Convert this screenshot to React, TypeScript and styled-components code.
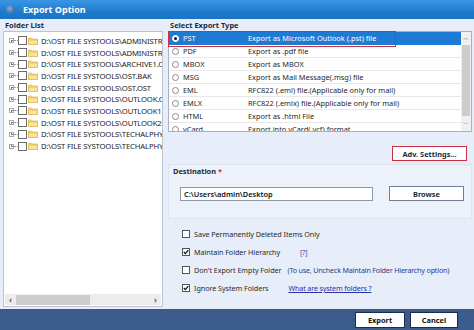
import React from "react";
import styled, { createGlobalStyle, css } from "styled-components";

const Global = createGlobalStyle`
  html, body { margin: 0; padding: 0; }
  body { font-family: "Noto Sans", "Open Sans", sans-serif; }
  * { box-sizing: border-box; }
`;

const Window = styled.div`
  width: 474px;
  height: 330px;
  display: flex;
  flex-direction: column;
  background: #e7eef9;
  overflow: hidden;
`;

const TitleBar = styled.div`
  height: 19px;
  flex: none;
  display: flex;
  align-items: center;
  gap: 8px;
  padding-left: 6px;
  background: linear-gradient(#3a97e4, #1f7bcf 60%, #1a72c4);
  color: #fff;
  font-weight: 700;
  font-size: 9px;
`;

const AppIcon = styled.span`
  width: 9px;
  height: 9px;
  border-radius: 50%;
  background: radial-gradient(circle at 40% 40%, #9fb6d6, #3e6aa3 70%);
  opacity: 0.8;
`;

const Main = styled.div`
  flex: 1;
  display: flex;
  gap: 5px;
  padding: 0 2px 2px 3px;
  min-height: 0;
`;

const LeftCol = styled.div`
  width: 160px;
  display: flex;
  flex-direction: column;
`;

const RightCol = styled.div`
  flex: 1;
  display: flex;
  flex-direction: column;
  min-width: 0;
`;

const SectionLabel = styled.div`
  height: 12px;
  font-size: 7.5px;
  font-weight: 700;
  color: #1d2a3a;
  line-height: 12px;
  padding-left: 2px;
  flex: none;
`;

const TreeBox = styled.div`
  flex: 1;
  background: #fff;
  border: 1px solid #b9c3d2;
  display: flex;
  flex-direction: column;
  min-height: 0;
`;

const TreeList = styled.div`
  flex: 1;
  padding: 3px 0 0 5px;
  overflow: hidden;
`;

const TreeRow = styled.div`
  height: 11.7px;
  display: flex;
  align-items: center;
  white-space: nowrap;
`;

const Expander = styled.span`
  width: 5px;
  height: 5px;
  border: 1px solid #a9a9a9;
  position: relative;
  flex: none;
  &::before {
    content: "";
    position: absolute;
    left: 0.5px;
    right: 0.5px;
    top: 1px;
    height: 1px;
    background: #777;
  }
  &::after {
    content: "";
    position: absolute;
    top: 0.5px;
    bottom: 0.5px;
    left: 1px;
    width: 1px;
    background: #777;
  }
`;

const Dots = styled.span`
  width: 4px;
  border-top: 1px dotted #999;
  flex: none;
`;

const Check = styled.span`
  width: 9px;
  height: 9px;
  border: 1px solid #6d6d6d;
  background: #fff;
  flex: none;
`;

const FolderSvg = styled.svg`
  flex: none;
  margin: 0 3px 0 1px;
`;

const TreeText = styled.span`
  font-size: 7.7px;
  color: #1a1a1a;
  letter-spacing: -0.15px;
`;

const HScroll = styled.div`
  height: 11px;
  background: #ececec;
  display: flex;
  align-items: center;
  flex: none;
  margin: 0 1px 1px;
`;

const ScrollArrow = styled.span`
  width: 11px;
  font-size: 8px;
  color: #555;
  text-align: center;
  line-height: 11px;
  font-weight: 700;
`;

const HThumb = styled.span`
  width: 74px;
  height: 10px;
  background: #cdcdcd;
`;

const Spacer = styled.span`
  flex: 1;
`;

const TypeTable = styled.div`
  height: 101px;
  flex: none;
  background: #fff;
  border: 1px solid #a7b1c0;
  display: flex;
  position: relative;
`;

const TypeRows = styled.div`
  flex: 1;
  overflow: hidden;
`;

const TypeRow = styled.div<{ $sel?: boolean }>`
  height: 13px;
  display: flex;
  align-items: center;
  border-bottom: 1px solid #e6e8ec;
  font-size: 7.4px;
  color: #1f1f1f;
  white-space: nowrap;
  ${(p) =>
    p.$sel &&
    css`
      background: #1f7ad3;
      color: #fff;
      border-bottom-color: #1f7ad3;
    `}
`;

const TypeName = styled.span`
  width: 65px;
  flex: none;
`;

const Radio = styled.span<{ $on?: boolean }>`
  width: 7px;
  height: 7px;
  flex: none;
  border-radius: 50%;
  margin: 0 4px 0 3px;
  border: 1px solid #8a8a8a;
  background: #fff;
  position: relative;
  ${(p) =>
    p.$on &&
    css`
      border-color: #fff;
      &::after {
        content: "";
        position: absolute;
        left: 1px;
        top: 1px;
        width: 3px;
        height: 3px;
        border-radius: 50%;
        background: #111;
      }
    `}
`;

const SelOutline = styled.div`
  position: absolute;
  left: -1px;
  top: -1px;
  width: 228px;
  height: 16px;
  border: 1.5px solid #c8323f;
  pointer-events: none;
`;

const VScroll = styled.div`
  width: 10px;
  flex: none;
  background: #f0f0f0;
  display: flex;
  flex-direction: column;
  align-items: center;
`;

const VArrow = styled.span`
  height: 13px;
  font-size: 6px;
  line-height: 13px;
  color: #555;
`;

const VThumb = styled.span`
  width: 8px;
  height: 71px;
  background: #cdcdcd;
`;

const AdvRow = styled.div`
  display: flex;
  justify-content: flex-end;
  padding: 14px 5px 0 0;
  flex: none;
`;

const Button = styled.button<{ $red?: boolean; $w: number }>`
  width: ${(p) => p.$w}px;
  height: 15px;
  padding: 0;
  font-family: inherit;
  font-size: 7.4px;
  font-weight: 700;
  color: #1a2a44;
  background: #fff;
  border: 1px solid #6f7f96;
  ${(p) =>
    p.$red &&
    css`
      border: 1.5px solid #c8323f;
    `}
`;

const DestBox = styled.div`
  margin-top: 3px;
  height: 55px;
  flex: none;
  border: 1px solid #dde4ef;
  background: #ecf1fa;
  padding: 0 7px 0 4px;
  display: flex;
  flex-direction: column;
`;

const DestLabel = styled.div`
  font-size: 7.4px;
  font-weight: 700;
  color: #1d2a3a;
  height: 12px;
  line-height: 12px;
  span { color: #c8323f; }
`;

const DestRow = styled.div`
  display: flex;
  align-items: center;
  justify-content: space-between;
  margin-top: 9px;
  padding-left: 7px;
`;

const PathInput = styled.div`
  width: 193px;
  height: 14px;
  background: #fff;
  border: 1px solid #8c98aa;
  font-size: 7.4px;
  font-weight: 600;
  color: #111;
  line-height: 12px;
  padding-left: 3px;
`;

const Options = styled.div`
  margin-top: 6px;
  padding-left: 14px;
  display: flex;
  flex-direction: column;
`;

const OptRow = styled.div`
  height: 18px;
  display: flex;
  align-items: center;
  font-size: 7.2px;
  color: #2a2a2a;
  letter-spacing: -0.05px;
  white-space: nowrap;
`;

const OptCheck = styled.span`
  width: 8px;
  height: 8px;
  border: 1px solid #555;
  background: #fff;
  margin-right: 4px;
  flex: none;
  display: flex;
  align-items: center;
  justify-content: center;
`;

const Help = styled.span`
  margin-left: 20px;
  color: #3a4aa0;
  font-size: 7px;
`;

const Note = styled.span`
  margin-left: 6px;
  color: #2d3a8c;
  letter-spacing: -0.2px;
`;

const Link = styled.span`
  margin-left: 20px;
  color: #2f2fa8;
  text-decoration: underline;
  letter-spacing: -0.15px;
`;

const Footer = styled.div`
  height: 21px;
  flex: none;
  background: #3b5b8c;
  display: flex;
  align-items: center;
  justify-content: flex-end;
  gap: 5px;
  padding-right: 16px;
`;

const FootButton = styled(Button)`
  height: 16px;
  border: 1px solid #1e2d44;
  color: #111;
`;

const Tick = () => (
  <svg width="6" height="6" viewBox="0 0 6 6">
    <path d="M0.8 3 L2.4 4.6 L5.3 1.2" stroke="#111" strokeWidth="1.3" fill="none" />
  </svg>
);

const Folder = () => (
  <FolderSvg width="10" height="8" viewBox="0 0 10 8">
    <path d="M0.5 1 H3.5 L4.5 2 H9.5 V7.5 H0.5 Z" fill="#f5d67a" stroke="#d9b24a" strokeWidth="0.6" />
    <path d="M0.5 3 H9.5 V7.5 H0.5 Z" fill="#fbe39a" stroke="#d9b24a" strokeWidth="0.6" />
  </FolderSvg>
);

const folders = [
  "D:\\OST FILE SYSTOOLS\\ADMINISTRATOR.OST",
  "D:\\OST FILE SYSTOOLS\\ADMINISTRATOR2.OST",
  "D:\\OST FILE SYSTOOLS\\ARCHIVE1.OST",
  "D:\\OST FILE SYSTOOLS\\OST.BAK",
  "D:\\OST FILE SYSTOOLS\\OST.OST",
  "D:\\OST FILE SYSTOOLS\\OUTLOOK.OST",
  "D:\\OST FILE SYSTOOLS\\OUTLOOK1.OST",
  "D:\\OST FILE SYSTOOLS\\OUTLOOK2.OST",
  "D:\\OST FILE SYSTOOLS\\TECHALPHY.OST",
  "D:\\OST FILE SYSTOOLS\\TECHALPHY2.OST",
];

const types: [string, string][] = [
  ["PST", "Export as Microsoft Outlook (.pst) file"],
  ["PDF", "Export as .pdf file"],
  ["MBOX", "Export as MBOX"],
  ["MSG", "Export as Mail Message(.msg) file"],
  ["EML", "RFC822 (.eml) file.(Applicable only for mail)"],
  ["EMLX", "RFC822 (.emlx) file.(Applicable only for mail)"],
  ["HTML", "Export as .html File"],
  ["vCard", "Export into vCard(.vcf) format"],
];

export default function App() {
  return (
    <Window>
      <Global />
      <TitleBar>
        <AppIcon />
        Export Option
      </TitleBar>
      <Main>
        <LeftCol>
          <SectionLabel>Folder List</SectionLabel>
          <TreeBox>
            <TreeList>
              {folders.map((f) => (
                <TreeRow key={f}>
                  <Expander />
                  <Dots />
                  <Check />
                  <Folder />
                  <TreeText>{f}</TreeText>
                </TreeRow>
              ))}
            </TreeList>
            <HScroll>
              <ScrollArrow>‹</ScrollArrow>
              <HThumb />
              <Spacer />
              <ScrollArrow>›</ScrollArrow>
            </HScroll>
          </TreeBox>
        </LeftCol>
        <RightCol>
          <SectionLabel>Select Export Type</SectionLabel>
          <TypeTable>
            <TypeRows>
              {types.map(([t, d], i) => (
                <TypeRow key={t} $sel={i === 0}>
                  <Radio $on={i === 0} />
                  <TypeName>{t}</TypeName>
                  <span>{d}</span>
                </TypeRow>
              ))}
            </TypeRows>
            <VScroll>
              <VArrow>︿</VArrow>
              <VThumb />
              <Spacer />
              <VArrow>﹀</VArrow>
            </VScroll>
            <SelOutline />
          </TypeTable>
          <AdvRow>
            <Button $red $w={75}>Adv. Settings...</Button>
          </AdvRow>
          <DestBox>
            <DestLabel>
              Destination <span>*</span>
            </DestLabel>
            <DestRow>
              <PathInput>C:\Users\admin\Desktop</PathInput>
              <Button $w={75}>Browse</Button>
            </DestRow>
          </DestBox>
          <Options>
            <OptRow>
              <OptCheck />
              Save Permanently Deleted Items Only
            </OptRow>
            <OptRow>
              <OptCheck>
                <Tick />
              </OptCheck>
              Maintain Folder Hierarchy
              <Help>[?]</Help>
            </OptRow>
            <OptRow>
              <OptCheck />
              Don't Export Empty Folder
              <Note>(To use, Uncheck Maintain Folder Hierarchy option)</Note>
            </OptRow>
            <OptRow>
              <OptCheck>
                <Tick />
              </OptCheck>
              Ignore System Folders
              <Link>What are system folders ?</Link>
            </OptRow>
          </Options>
        </RightCol>
      </Main>
      <Footer>
        <FootButton $w={50}>Export</FootButton>
        <FootButton $w={48}>Cancel</FootButton>
      </Footer>
    </Window>
  );
}
